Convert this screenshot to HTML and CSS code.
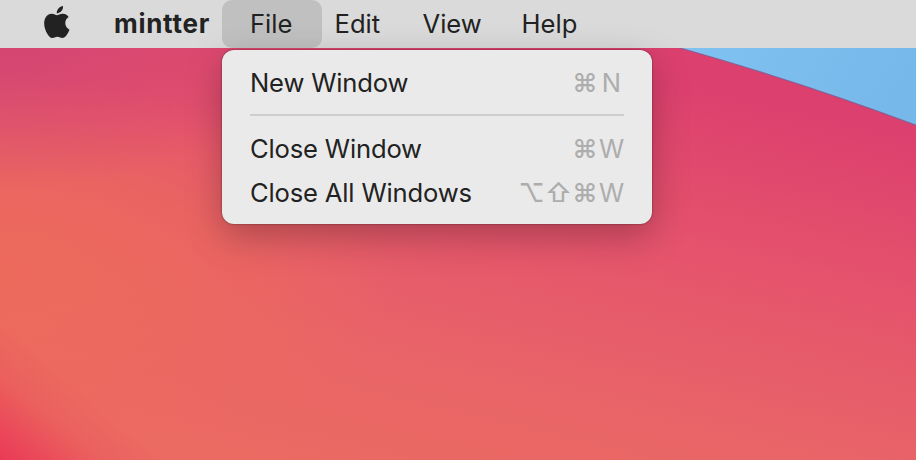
FILE: index.html
```html
<!DOCTYPE html>
<html lang="en">
<head>
<meta charset="utf-8">
<title>mintter</title>
<link rel="stylesheet" href="styles.css">
</head>
<body>
<div class="desktop">
  <svg class="sky" viewBox="0 0 916 460" aria-hidden="true">
    <defs>
      <linearGradient id="blue" x1="0" y1="0" x2="1" y2="0.2">
        <stop offset="0" stop-color="#80c2f1"/>
        <stop offset="1" stop-color="#77b8ea"/>
      </linearGradient>
    </defs>
    <path d="M677 47Q804 83 918 126V47Z" fill="url(#blue)"/>
    <path d="M677 47Q804 83 918 126" fill="none" stroke="#7a5c92" stroke-opacity=".75" stroke-width="1.2"/>
  </svg>
  <nav class="menubar">
    <svg class="apple" viewBox="2.1 0 19.7 24" preserveAspectRatio="none" aria-hidden="true"><path d="M12.152 6.896c-.948 0-2.415-1.078-3.96-1.04-2.04.027-3.91 1.183-4.961 3.014-2.117 3.675-.546 9.103 1.519 12.09 1.013 1.454 2.208 3.09 3.792 3.039 1.52-.065 2.09-.987 3.935-.987 1.831 0 2.35.987 3.96.948 1.637-.026 2.676-1.48 3.676-2.948 1.156-1.688 1.636-3.325 1.662-3.415-.039-.013-3.182-1.221-3.22-4.857-.026-3.04 2.48-4.494 2.597-4.559-1.429-2.09-3.623-2.324-4.39-2.376-2-.156-3.675 1.09-4.61 1.09zM15.53 3.83c.843-1.012 1.4-2.427 1.245-3.83-1.207.052-2.662.805-3.532 1.818-.78.896-1.454 2.338-1.273 3.714 1.338.104 2.715-.688 3.559-1.701"/></svg>
    <span class="app">mintter</span>
    <span class="item file">File</span>
    <span class="item edit">Edit</span>
    <span class="item view">View</span>
    <span class="item help">Help</span>
  </nav>
  <div class="menu">
    <div class="row"><span class="label">New Window</span><span class="keys"><i>⌘</i><b>N</b></span></div>
    <div class="rule"></div>
    <div class="row"><span class="label">Close Window</span><span class="keys"><i>⌘</i><b>W</b></span></div>
    <div class="row"><span class="label">Close All Windows</span><span class="keys"><i>⌥</i><i>⇧</i><i>⌘</i><b>W</b></span></div>
  </div>
</div>
</body>
</html>
```

FILE: styles.css
```css
* { box-sizing: border-box; }
body {
  margin: 0;
  font-family: Inter, "Liberation Sans", sans-serif;
  font-size: 25.6px;
  font-weight: 430;
  color: #222;
}
.desktop {
  position: relative;
  width: 916px;
  height: 460px;
  overflow: hidden;
  background:
    linear-gradient(40deg, #ea3a56 0, rgba(234, 58, 86, .75) 22px, rgba(234, 58, 86, .2) 65px, rgba(234, 58, 86, 0) 105px),
    radial-gradient(ellipse 320px 160px at 0 30px, rgba(212, 70, 114, 1) 10%, rgba(212, 70, 114, .5) 50%, rgba(212, 70, 114, 0)),
    radial-gradient(ellipse 400px 200px at 0 275px, rgba(236, 106, 92, 1) 0%, rgba(236, 106, 92, .7) 45%, rgba(236, 106, 92, 0) 100%),
    linear-gradient(193deg, #dc406e 20%, #e5536c 45%, #e86468 70%, #eb6a62 90%);
}
.sky { position: absolute; inset: 0; width: 916px; height: 460px; }
.menubar {
  position: relative;
  display: flex;
  align-items: center;
  height: 48px;
  padding-left: 44px;
  background: #dadada;
  line-height: 48px;
  white-space: nowrap;
}
.apple { width: 25.5px; height: 32px; margin-top: -4px; fill: #222; flex: none; }
.app { width: 108px; margin-left: 44.5px; font-size: 26px; font-weight: 700; font-variant-ligatures: none; font-feature-settings: "calt" 0; letter-spacing: .72px; }
.item { height: 48px; }
.file { width: 100px; padding-left: 28px; border-radius: 10px; background: #c0c0c0; }
.edit { width: 88px; padding-left: 12.5px; }
.view { width: 99px; padding-left: 12.5px; }
.help { padding-left: 12.5px; }
.menu {
  position: absolute;
  left: 222px;
  top: 50px;
  width: 430px;
  height: 174px;
  padding: 11px 28px;
  border-radius: 12px;
  background: #eaeaea;
  box-shadow: 0 0 2px rgba(0, 0, 0, .55), 0 12px 36px rgba(0, 0, 0, .26);
}
.row {
  display: flex;
  justify-content: space-between;
  height: 44px;
  line-height: 44px;
  white-space: nowrap;
}
.label { letter-spacing: -.17px; }
.rule { height: 2px; margin: 9px 0 11px; background: #cecece; }
.keys { display: flex; color: #adadad; }
.keys i { width: 27px; text-align: center; font-style: normal; font-weight: 500; }
.keys i:nth-last-child(2) { width: 26px; margin-right: 1px; }
.keys b { width: 25px; text-align: center; font-weight: 430; }
```
